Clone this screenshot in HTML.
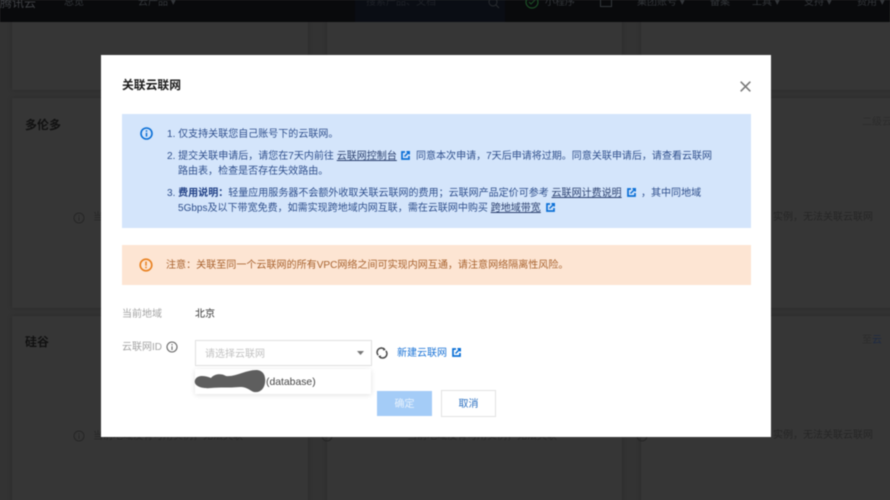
<!DOCTYPE html>
<html lang="zh">
<head>
<meta charset="utf-8">
<style>
html,body{margin:0;padding:0;width:890px;height:500px;overflow:hidden;background:#333}
body{position:relative;font-family:"Liberation Sans","Noto Sans CJK SC",sans-serif}
.a{position:absolute;white-space:nowrap;line-height:14px}
.box{position:absolute}
.card{position:absolute;background:#363636;box-shadow:0 0 3px #292929}
.info{font-size:10.02px;color:#2f4f8c}
.lnk{color:#2a3f6e;text-decoration:underline}
svg{position:absolute;overflow:visible}
.dim{color:#262626;font-size:10px}
.top{color:#33363a;font-size:10px}
#t{filter:blur(.4px)}
</style>
</head>
<body>
<div id="t" style="position:absolute;left:0;top:0;width:890px;height:500px">
<!-- cards behind the modal -->
<div class="card" style="left:12px;top:10px;width:296px;height:80px"></div>
<div class="card" style="left:327px;top:10px;width:295px;height:80px"></div>
<div class="card" style="left:641px;top:10px;width:260px;height:80px"></div>
<div class="card" style="left:12px;top:98px;width:296px;height:210px"></div>
<div class="card" style="left:327px;top:98px;width:295px;height:210px"></div>
<div class="card" style="left:641px;top:98px;width:260px;height:210px"></div>
<div class="card" style="left:12px;top:316px;width:296px;height:200px"></div>
<div class="card" style="left:327px;top:316px;width:295px;height:200px"></div>
<div class="card" style="left:641px;top:316px;width:260px;height:200px"></div>

<div class="a" style="left:25px;top:118px;font-size:12px;font-weight:bold;color:#111">多伦多</div>
<div class="a" style="left:25px;top:335px;font-size:12px;font-weight:bold;color:#111">硅谷</div>
<svg style="left:73px;top:212px" width="12" height="12" viewBox="0 0 12 12"><circle cx="6" cy="6" r="5" fill="none" stroke="#262626" stroke-width="1"/><path d="M6 3.200v1M6 5.200v3.600" stroke="#262626"/></svg>
<svg style="left:73px;top:430px" width="12" height="12" viewBox="0 0 12 12"><circle cx="6" cy="6" r="5" fill="none" stroke="#262626" stroke-width="1"/><path d="M6 3.200v1M6 5.200v3.600" stroke="#262626"/></svg>
<div class="a dim" style="left:93px;top:211px">当</div>
<div class="a dim" style="left:773px;top:211px">实例，无法关联云联网</div>
<div class="a dim" style="left:773px;top:429px">实例，无法关联云联网</div>
<div class="a" style="left:862px;top:116px;font-size:10px;color:#2c2c2c">二级云</div>
<div class="a" style="left:862px;top:334px;font-size:10px;color:#2c2c2c">至<span style="color:#1d2a44">云</span></div>
<svg style="left:321px;top:430px" width="12" height="12" viewBox="0 0 12 12"><circle cx="6" cy="6" r="5" fill="none" stroke="#262626"/></svg>
<svg style="left:636px;top:430px" width="12" height="12" viewBox="0 0 12 12"><circle cx="6" cy="6" r="5" fill="none" stroke="#262626"/></svg>
<div class="a dim" style="left:93px;top:430px;width:150px;overflow:hidden">当前地域没有可用实例，无法关联</div>
<div class="a dim" style="left:407px;top:430px;width:150px;overflow:hidden">当前地域没有可用实例，无法关联</div>

<!-- top bar -->
<div class="box" style="left:0;top:0;width:890px;height:22px;background:#090a0c"></div>
<div class="box" style="left:355px;top:0;width:150px;height:22px;background:#0a0d14"></div>
<div class="a" style="left:0;top:-4px;font-size:12px;color:#3f4145">腾讯云</div>
<div class="a top" style="left:64px;top:-4px">总览</div>
<div class="a top" style="left:138px;top:-4px">云产品 ▾</div>
<div class="a top" style="left:366px;top:-4px;color:#1f2228">搜索产品、文档</div>
<svg style="left:488px;top:-3px" width="12" height="12" viewBox="0 0 12 12"><circle cx="5" cy="5" r="4" fill="none" stroke="#2a2d31"/><path d="M8 8l3 3" stroke="#2a2d31"/></svg>
<svg style="left:525px;top:-5px" width="14" height="14" viewBox="0 0 14 14"><circle cx="7" cy="7" r="6" fill="none" stroke="#1c4f26" stroke-width="1.200"/><path d="M4 7l2 2 4-4" fill="none" stroke="#1c4f26"/></svg>
<div class="a top" style="left:545px;top:-4px">小程序</div>
<svg style="left:600px;top:-3px" width="12" height="10" viewBox="0 0 12 10"><path d="M.5 0v9.500h11V0" fill="none" stroke="#33363a"/></svg>
<div class="a top" style="left:637px;top:-4px">集团账号 ▾</div>
<div class="a top" style="left:710px;top:-4px">备案</div>
<div class="a top" style="left:752px;top:-4px">工具 ▾</div>
<div class="a top" style="left:804px;top:-4px">支持 ▾</div>
<div class="a top" style="left:857px;top:-4px">费用 ▾</div>

<!-- modal -->
<div class="box" style="left:101px;top:55px;width:670px;height:382px;background:#fff"></div>
<div class="a" style="left:122px;top:78px;font-size:11.8px;font-weight:bold;color:#1a1a1a">关联云联网</div>
<svg style="left:740px;top:81px" width="11" height="11" viewBox="0 0 11 11"><path d="M.7.700l9.600 9.600M10.300.7l-9.600 9.600" stroke="#777" stroke-width="1.500"/></svg>

<!-- info box -->
<div class="box" style="left:122px;top:114px;width:629px;height:114px;background:#d4e5fb"></div>
<svg style="left:140px;top:127px" width="13" height="13" viewBox="0 0 13 13"><circle cx="6.500" cy="6.500" r="5.500" fill="none" stroke="#0a6fd6" stroke-width="1.600"/><path d="M6.500 3.300v1.400M6.500 5.800v3.800" stroke="#0a6fd6" stroke-width="1.500"/></svg>
<div class="a info" style="left:167px;top:128px">1. 仅支持关联您自己账号下的云联网。</div>
<div class="a info" style="left:167px;top:150px">2. 提交关联申请后，请您在7天内前往 <span class="lnk">云联网控制台</span></div>
<svg style="left:401px;top:151px" width="9" height="9" viewBox="0 0 9 9"><path d="M4 1H1v7h7V5" fill="none" stroke="#0a6fd6" stroke-width="1.700"/><path d="M3.500 5.500L8 1M5.500 .8H8.200V3.500" fill="none" stroke="#0a6fd6" stroke-width="1.500"/></svg>
<div class="a info" style="left:416px;top:150px">同意本次申请，7天后申请将过期。同意关联申请后，请查看云联网</div>
<div class="a info" style="left:178px;top:165px">路由表，检查是否存在失效路由。</div>
<div class="a info" style="left:167px;top:187px">3. <b style="color:#1f3f85">费用说明：</b>轻量应用服务器不会额外收取关联云联网的费用；云联网产品定价可参考 <span class="lnk">云联网计费说明</span></div>
<svg style="left:627px;top:188px" width="9" height="9" viewBox="0 0 9 9"><path d="M4 1H1v7h7V5" fill="none" stroke="#0a6fd6" stroke-width="1.700"/><path d="M3.500 5.500L8 1M5.500 .8H8.200V3.500" fill="none" stroke="#0a6fd6" stroke-width="1.500"/></svg>
<div class="a info" style="left:641px;top:187px">，其中同地域</div>
<div class="a info" style="left:178px;top:202px">5Gbps及以下带宽免费，如需实现跨地域内网互联，需在云联网中购买 <span class="lnk">跨地域带宽</span></div>
<svg style="left:546px;top:203px" width="9" height="9" viewBox="0 0 9 9"><path d="M4 1H1v7h7V5" fill="none" stroke="#0a6fd6" stroke-width="1.700"/><path d="M3.500 5.500L8 1M5.500 .8H8.200V3.500" fill="none" stroke="#0a6fd6" stroke-width="1.500"/></svg>

<!-- warning box -->
<div class="box" style="left:122px;top:245px;width:629px;height:40px;background:#fde5d3"></div>
<svg style="left:139px;top:258px" width="14" height="14" viewBox="0 0 14 14"><circle cx="7" cy="7" r="5.800" fill="none" stroke="#e8801f" stroke-width="1.600"/><path d="M7 3.500v4.200M7 8.800v1.500" stroke="#e8801f" stroke-width="1.500"/></svg>
<div class="a" style="left:166px;top:259px;font-size:10.05px;color:#a8622e">注意：关联至同一个云联网的所有VPC网络之间可实现内网互通，请注意网络隔离性风险。</div>

<!-- form -->
<div class="a" style="left:122px;top:308px;font-size:10px;color:#a3a3a3">当前地域</div>
<div class="a" style="left:195px;top:308px;font-size:10px;color:#333">北京</div>
<div class="a" style="left:122px;top:341px;font-size:10px;color:#a3a3a3">云联网ID</div>
<svg style="left:166px;top:341px" width="12" height="12" viewBox="0 0 12 12"><circle cx="6" cy="6" r="5" fill="none" stroke="#666" stroke-width="1.100"/><path d="M6 3v1.200M6 5.200v3.800" stroke="#666" stroke-width="1.100"/></svg>

<div class="box" style="left:195px;top:340px;width:175px;height:24px;border:1px solid #e0e0e0;background:#fff"></div>
<div class="a" style="left:205px;top:348px;font-size:10px;color:#c2c2c2">请选择云联网</div>
<svg style="left:357px;top:351px" width="7" height="4" viewBox="0 0 7 4"><path d="M0 0h7L3.500 4z" fill="#777"/></svg>
<svg style="left:376px;top:347px" width="12" height="12" viewBox="0 0 13 14"><path d="M2 9.500A5 5 0 0 1 9.500 2.800M11 4.500A5 5 0 0 1 3.500 11.200" fill="none" stroke="#444" stroke-width="1.700"/><path d="M8.500 .8l2.500 2.700-3.400.6zM4.500 13.200L2 10.500l3.400-.6z" fill="#444"/></svg>
<div class="a" style="left:397px;top:347px;font-size:10px;color:#1a73d6">新建云联网</div>
<svg style="left:452px;top:348px" width="9" height="9" viewBox="0 0 9 9"><path d="M4 1H1v7h7V5" fill="none" stroke="#0a6fd6" stroke-width="1.700"/><path d="M3.500 5.500L8 1M5.500 .8H8.200V3.500" fill="none" stroke="#0a6fd6" stroke-width="1.500"/></svg>

<!-- dropdown -->
<div class="box" style="left:195px;top:369px;width:176px;height:25px;background:#fff;box-shadow:0 1px 5px rgba(0,0,0,.12)"></div>
<svg style="left:194px;top:369px" width="72" height="24" viewBox="0 0 72 24"><path d="M1 11C3 6 10 6 17 9C20 5 27 4 32 7C42 8 52 1 62 1C70 1 72 8 71 14C70 20 66 24 60 23C56 22 54 18 46 18C34 19 26 18 17 19C8 20 -1 17 1 11Z" fill="#5e5e5e"/></svg>
<div class="a" style="left:266px;top:376px;font-size:10.4px;color:#444">(database)</div>

<!-- buttons -->
<div class="box" style="left:377px;top:391px;width:55px;height:25px;background:#a4ccf7"></div>
<div class="a" style="left:377px;top:398px;width:55px;text-align:center;font-size:10px;color:#e8f2fd">确定</div>
<div class="box" style="left:441px;top:390px;width:53px;height:25px;border:1px solid #e2e2e2;background:#fff"></div>
<div class="a" style="left:441px;top:398px;width:55px;text-align:center;font-size:10px;color:#2a6fc0">取消</div>
</div>
</body>
</html>
